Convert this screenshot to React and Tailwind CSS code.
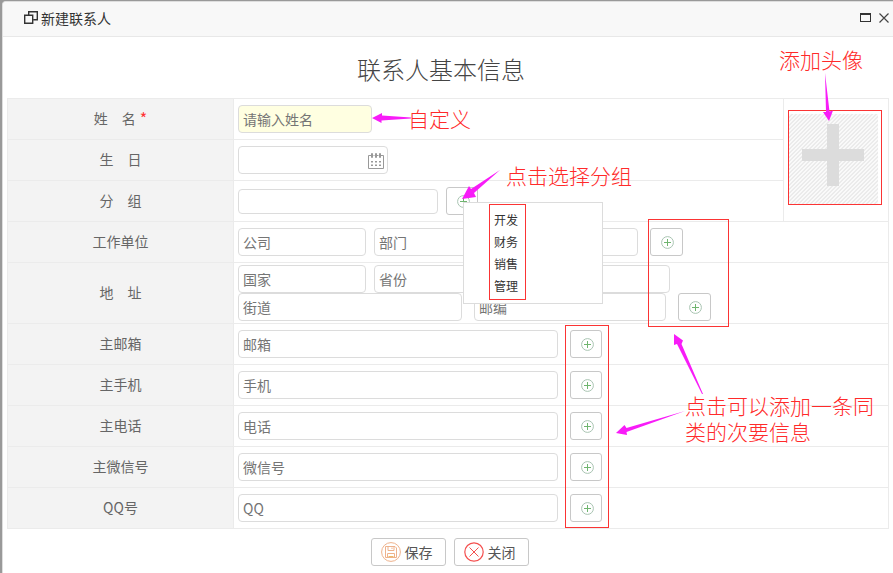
import React from 'react';

const FIELD =
  'rounded border border-[#dcdcdc] bg-white px-1 text-sm text-[#555] placeholder:text-[#757575] outline-none';

function PlusIcon() {
  return (
    <svg width="13" height="13" viewBox="0 0 13 13" fill="none" aria-hidden="true">
      <circle cx="6.5" cy="6.5" r="5.9" stroke="#a9c4b2" strokeWidth="1" />
      <path d="M3 6.5h7M6.5 3v7" stroke="#6fb56f" strokeWidth="1" />
    </svg>
  );
}

function AddButton({ label, wide }) {
  return (
    <button
      type="button"
      aria-label={label}
      className={`flex h-7 items-center justify-center rounded-[3px] border border-[#c8c8c8] bg-white pl-[2px] ${wide ? 'w-[33px]' : 'w-8'}`}
    >
      <PlusIcon />
    </button>
  );
}

function Row({ id, label, required, children }) {
  return (
    <div className="flex min-h-[41px] border-b border-[#ebebeb]">
      <label
        htmlFor={id}
        className="flex w-[226px] shrink-0 items-center justify-center border-r border-[#ebebeb] bg-[#f3f3f3] pb-[2px] text-sm text-[#666]"
      >
        {label}
        {required && <span className="ml-1 text-base leading-5 text-[#f33]">*</span>}
      </label>
      <div className="flex flex-1 flex-col justify-center pl-1">{children}</div>
    </div>
  );
}

function CalendarIcon() {
  return (
    <svg width="16" height="16" viewBox="0 0 16 16" fill="none" aria-hidden="true">
      <path
        d="M3 2.5H.5v13h15v-13H13M5.5 2.5h1M9 2.5h1.5M3.500 4.500v-4h1v4zM7.500 4.500v-4h1v4zM11.500 4.500v-4h1v4z"
        stroke="#999"
        strokeWidth="1"
      />
      <path
        d="M3 8h2v1.500H3zM7 8h2v1.500H7zM11 8h2v1.500h-2zM3 11.500h2V13H3zM7 11.500h2V13H7zM11 11.500h2V13h-2z"
        fill="#999"
      />
    </svg>
  );
}

const CONTACTS = [
  { id: 'email', label: '主邮箱', hint: '邮箱' },
  { id: 'mobile', label: '主手机', hint: '手机' },
  { id: 'phone', label: '主电话', hint: '电话' },
  { id: 'wechat', label: '主微信号', hint: '微信号' },
  { id: 'qq', label: 'QQ号', hint: 'QQ' },
];

const GROUPS = ['开发', '财务', '销售', '管理'];

const NOTE = 'absolute text-[21px] leading-[26px] font-light text-[#ff2a2a]';
const FRAME = 'absolute border border-[#fb3434]';

function Notes() {
  return (
    <div className="pointer-events-none absolute inset-0 z-20 overflow-hidden">
      <div className={`${FRAME} left-[788px] top-[110px] h-[95px] w-[94px]`} />
      <div className={`${FRAME} left-[489px] top-[204px] h-24 w-[37px]`} />
      <div className={`${FRAME} left-[648px] top-[219px] h-[108px] w-[81px]`} />
      <div className={`${FRAME} left-[565px] top-[325px] h-[203px] w-11`} />
      <svg className="absolute left-0 top-0" width="893" height="573" fill="#f81cf8" aria-hidden="true">
        <path d="M825 73L826 112L823 112L829 121L833 110.500L829.500 111.500Z" />
        <path d="M411 117.500L382 115.500V113L372 118L381.500 123V120.500L411 118.500Z" />
        <path d="M500 170L471 189L469 186L462 199L476 197L474 193Z" />
        <path d="M703 394L681.500 344L683 340.500L674 334V345L677 344L702 394Z" />
        <path d="M685 411L626.500 428L624.500 425L616 433L627 435L626.500 432Z" />
      </svg>
      <p className={`${NOTE} left-[779px] top-[46px]`}>添加头像</p>
      <p className={`${NOTE} left-[408px] top-[105px]`}>自定义</p>
      <p className={`${NOTE} left-[506px] top-[162px]`}>点击选择分组</p>
      <p className={`${NOTE} left-[685px] top-[392px] w-[190px]`}>点击可以添加一条同类的次要信息</p>
    </div>
  );
}

export default function App() {
  return (
    <div className="relative flex min-h-screen flex-col bg-[#999] pl-[2px] pt-px font-['Noto_Sans_CJK_SC',sans-serif]">
      <div className="flex-1 rounded-tl border-l border-t border-[#dedede] bg-white">
        <header className="flex h-[35px] items-center justify-between rounded-tl border-b border-[#e8e8e8] bg-[#f8f8f8] pb-[3px] pl-[21px] pr-1">
          <h1 className="flex items-center gap-[3px] text-sm text-[#333]">
            <svg width="14" height="13" viewBox="0 0 14 13" fill="none" stroke="#333" strokeWidth="1.400" aria-hidden="true">
              <path d="M4.700 3.500V.7h8.600v8H9.500M.7 4.200h8v8h-8z" />
            </svg>
            新建联系人
          </h1>
          <div className="flex items-center gap-2">
            <button type="button" aria-label="最大化">
              <svg width="11" height="9" viewBox="0 0 11 9" aria-hidden="true">
                <path d="M0 0h11v9H0zM1 2v6h9V2z" fill="#333" fillRule="evenodd" />
              </svg>
            </button>
            <button type="button" aria-label="关闭窗口">
              <svg width="10" height="10" viewBox="0 0 10 10" stroke="#444" strokeWidth="1.200" aria-hidden="true">
                <path d="M.5.5l9 9M9.500.5l-9 9" />
              </svg>
            </button>
          </div>
        </header>

        <form>
          <h2 className="pb-[13px] pt-4 pr-[14px] text-center text-2xl leading-8 font-light text-[#444]">联系人基本信息</h2>

          <div className="ml-1 mr-1 border-l border-r border-t border-[#ebebeb]">
            <div className="flex">
              <div className="flex-1">
                <Row id="name" label={'姓　名'} required>
                  <input
                    id="name"
                    placeholder="请输入姓名"
                    className="h-7 w-[134px] rounded border border-[#dcdcdc] bg-[#ffffe1] px-1 text-sm text-[#555] outline-none placeholder:text-[#757575]"
                  />
                </Row>
                <Row id="birthday" label={'生　日'}>
                  <div className="flex h-7 w-[150px] items-center rounded border border-[#dcdcdc] pr-[3px] pt-px">
                    <input id="birthday" className="h-full min-w-0 flex-1 bg-transparent px-1 text-sm outline-none" />
                    <CalendarIcon />
                  </div>
                </Row>
                <Row id="group" label={'分　组'}>
                  <div className="flex items-center gap-2">
                    <input id="group" className={`${FIELD} h-[25px] w-[200px]`} />
                    <div className="relative">
                      <AddButton label="选择分组" />
                      <ul className="absolute left-[17px] top-[15px] z-10 w-[140px] border border-[#dcdcdc] bg-white py-[6px] pl-[30px]">
                        {GROUPS.map((g) => (
                          <li key={g} className="h-[22px]">
                            <button type="button" className="block text-xs leading-[22px] text-[#333]">{g}</button>
                          </li>
                        ))}
                      </ul>
                    </div>
                  </div>
                </Row>
              </div>
              <div className="flex w-[105px] items-center border-b border-l border-[#ebebeb] pb-[3px] pl-1">
                <button
                  type="button"
                  aria-label="添加头像"
                  className="flex h-[90px] w-[90px] items-start justify-center bg-[linear-gradient(135deg,#ebebeb_12%,#fafafa_25%,#fafafa_37%,#ebebeb_50%,#ebebeb_62%,#fafafa_75%,#fafafa_87%,#ebebeb_100%)] bg-[length:4px_4px] pt-[10px]"
                >
                  <svg width="62" height="62" viewBox="0 0 62 62" aria-hidden="true">
                    <path d="M25 0h12v25h25v12H37v25H25V37H0V25h25z" fill="#dcdcdc" />
                  </svg>
                </button>
              </div>
            </div>

            <Row id="company" label="工作单位">
              <div className="flex gap-2">
                <input id="company" placeholder="公司" className={`${FIELD} h-7 w-32`} />
                <input aria-label="部门" placeholder="部门" className={`${FIELD} h-7 w-32`} />
                <input aria-label="职位" className={`${FIELD} h-7 w-32`} />
                <div className="ml-1">
                  <AddButton label="添加工作单位" wide />
                </div>
              </div>
            </Row>

            <Row id="country" label={'地　址'}>
              <div className="flex gap-2 pt-[2px]">
                <input id="country" placeholder="国家" className={`${FIELD} h-7 w-32`} />
                <input aria-label="省份" placeholder="省份" className={`${FIELD} h-7 w-32`} />
                <input aria-label="城市" className={`${FIELD} h-7 w-40`} />
              </div>
              <div className="flex gap-3 pb-[2px]">
                <input aria-label="街道" placeholder="街道" className={`${FIELD} h-7 w-56`} />
                <input aria-label="邮编" placeholder="邮编" className={`${FIELD} h-7 w-48`} />
                <AddButton label="添加地址" wide />
              </div>
            </Row>

            {CONTACTS.map((c) => (
              <Row key={c.id} id={c.id} label={c.label}>
                <div className="flex gap-3">
                  <input id={c.id} placeholder={c.hint} className={`${FIELD} h-7 w-80`} />
                  <AddButton label={`添加${c.label}`} />
                </div>
              </Row>
            ))}
          </div>

          <div className="flex justify-center gap-2 pl-[4px] pt-[9px]">
            <button type="button" className="flex h-7 w-[75px] items-center justify-center gap-1 rounded-[3px] border border-[#c8c8c8] pb-px pr-1 text-sm text-[#555]">
              <svg width="20" height="20" viewBox="0 0 20 20" fill="none" stroke="#eeb28c" aria-hidden="true">
                <circle cx="10" cy="10" r="9.400" />
                <path d="M4.500 4.500h9.500l1.500 1.500v9.500h-11zM7 4.500v4h6v-4M11 5.500v1.500M6.500 15.500v-4h7v4" />
                <path d="M7.500 14.500h5" stroke="#eebb66" />
              </svg>
              保存
            </button>
            <button type="button" className="flex h-7 w-[75px] items-center justify-center gap-1 rounded-[3px] border border-[#c8c8c8] pb-px pr-1 text-sm text-[#555]">
              <svg width="20" height="20" viewBox="0 0 20 20" fill="none" stroke="#f4504f" aria-hidden="true">
                <circle cx="10" cy="10" r="9.200" strokeWidth="1.200" />
                <path d="M5.500 5.500l9 9M14.500 5.500l-9 9" />
              </svg>
              关闭
            </button>
          </div>
        </form>
      </div>
      <Notes />
    </div>
  );
}
